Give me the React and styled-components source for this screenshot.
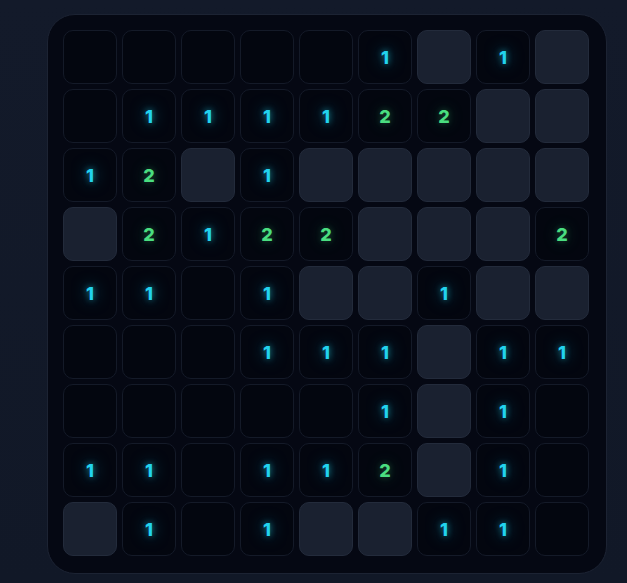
import React from "react";
import styled, { createGlobalStyle } from "styled-components";

const GlobalStyle = createGlobalStyle`
  html, body {
    margin: 0;
    padding: 0;
    background: #111827;
  }
  body {
    font-family: Inter, "Liberation Sans", sans-serif;
  }
`;

const Page = styled.div`
  min-height: 583px;
  box-sizing: border-box;
  padding: 14px 0 0 47px;
  background: linear-gradient(180deg, #131a2a 0%, #111827 100%);
`;

const Board = styled.div`
  width: 560px;
  height: 560px;
  box-sizing: border-box;
  padding: 15px;
  border: 1px solid #1c2333;
  border-radius: 28px;
  background: #050813;
  display: grid;
  grid-template-columns: repeat(9, 54px);
  grid-auto-rows: 54px;
  gap: 5px;
`;

const colors = {
  1: { c: "#22d3ee", glow: "rgba(34, 211, 238, 0.6)" },
  2: { c: "#4ade80", glow: "rgba(74, 222, 128, 0.3)" },
};

const Cell = styled.div`
  box-sizing: border-box;
  border-radius: 10px;
  display: flex;
  align-items: center;
  justify-content: center;
  font-size: 18px;
  font-weight: 800;
  border: 1px solid ${({ $hidden }) => ($hidden ? "#232b3b" : "#141a28")};
  background: ${({ $hidden }) => ($hidden ? "#1a2130" : "#03060f")};
  color: ${({ $n }) => (colors[$n] ? colors[$n].c : "transparent")};
  text-shadow: ${({ $n }) =>
    colors[$n]
      ? `0 0 6px ${colors[$n].glow}, 0 0 16px ${colors[$n].glow}`
      : "none"};
`;

const rows = [
  "000001U1U",
  "0111122UU",
  "12U1UUUUU",
  "U2122UUU2",
  "1101UU1UU",
  "000111U11",
  "000001U10",
  "110112U10",
  "U101UU110",
].map((r) => r.split(""));

const App = () => (
  <>
    <GlobalStyle />
    <Page>
      <Board>
        {rows.map((row, y) =>
          row.map((v, x) => (
            <Cell key={`${y}-${x}`} $hidden={v === "U"} $n={v}>
              {v !== "U" && v !== "0" ? v : ""}
            </Cell>
          ))
        )}
      </Board>
    </Page>
  </>
);

export default App;
